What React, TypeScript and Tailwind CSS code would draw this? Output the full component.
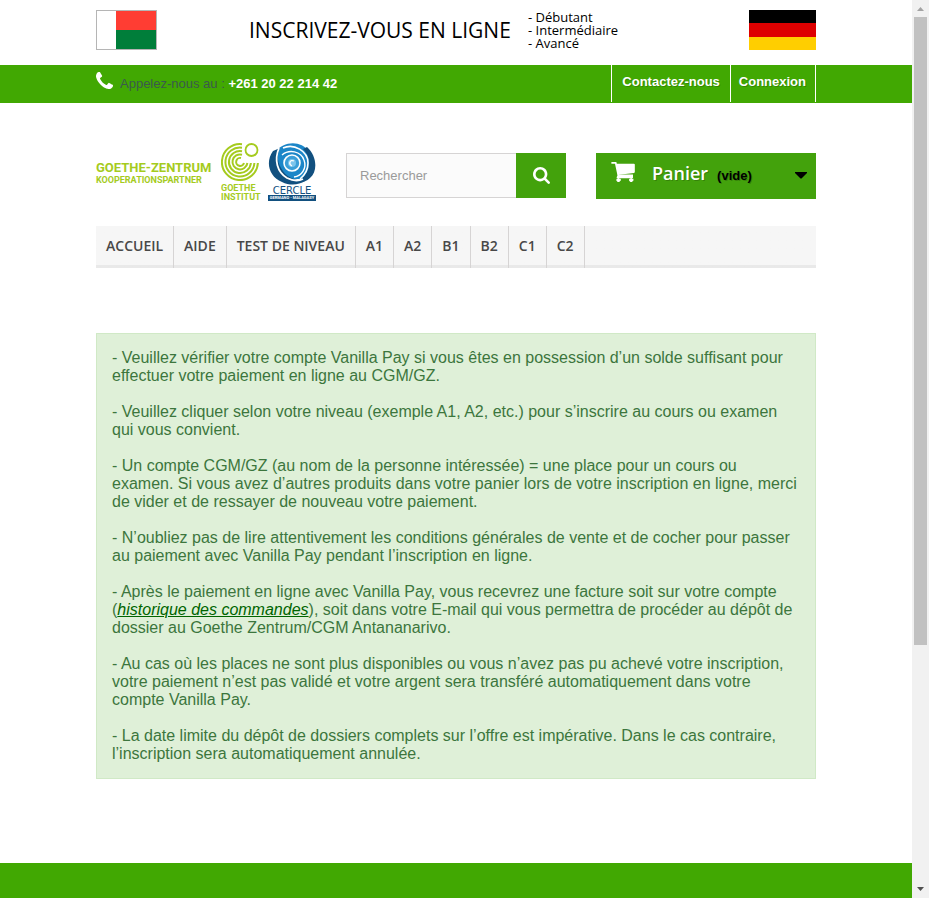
import React from "react";

const NAV = ["ACCUEIL", "AIDE", "TEST DE NIVEAU", "A1", "A2", "B1", "B2", "C1", "C2"];

function PhoneIcon() {
  return (
    <svg viewBox="0 128 1408 1408" className="size-[17px] fill-white" aria-hidden="true">
      <path d="M1408 1240q0 27-10 70.5t-21 68.5q-21 50-122 106-94 51-186 51-27 0-53-3.5t-57.5-12.5-47-14.5-55.5-20.5-49-18q-98-35-175-83-127-79-264-216t-216-264q-48-77-83-175-3-9-18-49t-20.5-55.5-14.5-47-12.5-57.5-3.5-53q0-92 51-186 56-101 106-122 25-11 68.5-21t70.5-10q14 0 21 3 18 6 53 76 11 19 30 54t35 63.5 31 53.5q3 4 17.5 25t21.5 35.5 7 28.5q0 20-28.5 50t-62 55-62 53-28.5 46q0 9 5 22.5t8.5 20.5 14 24 11.5 19q76 137 174 235t235 174q2 1 19 11.5t24 14 20.5 8.5 22.5 5q18 0 46-28.5t53-62 55-62 50-28.5q14 0 28.5 7t35.5 21.5 25 17.5q25 15 53.5 31t63.5 35 54 30q70 35 76 53 3 7 3 21z" />
    </svg>
  );
}

function SearchIcon() {
  return (
    <svg viewBox="64 128 1664 1664" className="size-[17px] fill-white" aria-hidden="true">
      <path d="M1216 832q0-185-131.5-316.5t-316.5-131.5-316.5 131.5-131.5 316.5 131.5 316.5 316.5 131.5 316.5-131.5 131.5-316.5zm512 832q0 52-38 90t-90 38q-54 0-90-38l-343-342q-179 124-399 124-143 0-273.5-55.5t-225-150-150-225-55.5-273.5 55.5-273.5 150-225 225-150 273.5-55.5 273.5 55.5 225 150 150 225 55.5 273.5q0 220-124 399l343 343q37 37 37 90z" />
    </svg>
  );
}

function CartIcon() {
  return (
    <svg viewBox="64 256 1664 1408" className="h-5 w-6 fill-white" aria-hidden="true">
      <path d="M704 1536q0 52-38 90t-90 38-90-38-38-90 38-90 90-38 90 38 38 90zm896 0q0 52-38 90t-90 38-90-38-38-90 38-90 90-38 90 38 38 90zm128-1088v512q0 24-16.5 42.5t-40.5 21.5l-1044 122q13 60 13 70 0 16-24 64h920q26 0 45 19t19 45-19 45-45 19h-1024q-26 0-45-19t-19-45q0-11 8-31.5t16-36 21.5-40 15.5-29.5l-177-823h-204q-26 0-45-19t-19-45 19-45 45-19h256q16 0 28.5 6.5t19.5 15.5 13 24.5 8 26 5.5 29.5 4.5 26h1201q26 0 45 19t19 45z" />
      <path d="M520 1130h1080v210H560zM440 1440h300v130H440zM1330 1440h300v130h-300z" />
    </svg>
  );
}

function GoetheMark() {
  return (
    <svg viewBox="0 0 38 38" className="size-[38px]" fill="none" stroke="#a5cb1e" aria-hidden="true">
      <circle cx="30.5" cy="7" r="6" strokeWidth="1.8" />
      <g strokeWidth="2">
        <path d="M21 1.200A18 18 0 1 0 36.900 20" />
        <path d="M21 4.700A14.500 14.500 0 1 0 33.400 20" />
        <path d="M21 8.200A11 11 0 1 0 29.900 20" />
        <path d="M21 11.700A7.500 7.500 0 1 0 26.400 20" />
        <path d="M20 15A4 4 0 1 0 23 20" />
      </g>
    </svg>
  );
}

function CercleMark() {
  return (
    <svg viewBox="0 0 48 43" className="h-[43px] w-12" fill="none" aria-hidden="true">
      <path d="M7 9C16-2 33-3 41 9c5 9 3 20-4 27H12C2 30 1 18 7 9z" fill="#1c86c8" />
      <path d="M5 8C-3 19 1 34 14 39c8 4 17 3 23-1-11 0-20-5-24-13C9 18 9 11 12 5z" fill="#12507f" />
      <path d="M39 4c10 9 11 24 3 31-4 4-9 5-14 4 9-4 13-11 13-19 0-7-3-11-6-14z" fill="#12507f" />
      <path d="M11 5C6 17 9 29 19 35c6 3 12 3 16 1" stroke="#fff" strokeWidth="1.8" />
      <path d="M15 5C26 0 40 8 40 20c0 7-3 12-8 16" stroke="#fff" strokeWidth="1.6" />
      <path d="M14 12c7-6 19-4 22 5 3 8-2 16-10 17" stroke="#fff" strokeWidth="1.4" />
      <circle cx="24" cy="20" r="8" fill="#3c9fd8" stroke="#fff" strokeWidth="1.6" />
      <circle cx="24" cy="20" r="4" fill="#7cc5ec" />
      <path d="M26 18c-4-2-6 3-2 5" stroke="#fff" strokeWidth="1.3" />
    </svg>
  );
}

function Logo() {
  return (
    <a href="#" aria-label="Goethe-Zentrum" className="flex w-[220px] shrink-0 font-['Roboto',sans-serif] font-bold text-[#a5cb1e]">
      <span className="w-[125px] pt-[17px] whitespace-nowrap">
        <span className="block text-[13px] leading-[15px]">GOETHE-ZENTRUM</span>
        <span className="block text-[9px] leading-[10px]">KOOPERATIONSPARTNER</span>
      </span>
      <span className="flex w-[47px] flex-col whitespace-nowrap">
        <GoetheMark />
        <span className="pt-[3px] text-[9px] leading-[9px]">GOETHE<br />INSTITUT</span>
      </span>
      <span className="flex w-12 flex-col text-center whitespace-nowrap text-[#12507f]">
        <CercleMark />
        <span className="font-['DejaVu_Sans',sans-serif] text-[10px] leading-[9px] font-normal">CERCLE</span>
        <span className="bg-[#12507f] text-[4px] leading-[6px] text-white">GERMANO - MALAGASY</span>
      </span>
    </a>
  );
}

const PARAS: React.ReactNode[] = [
  "- Veuillez vérifier votre compte Vanilla Pay si vous êtes en possession d’un solde suffisant pour effectuer votre paiement en ligne au CGM/GZ.",
  "- Veuillez cliquer selon votre niveau (exemple A1, A2, etc.) pour s’inscrire au cours ou examen qui vous convient.",
  "- Un compte CGM/GZ (au nom de la personne intéressée) = une place pour un cours ou examen. Si vous avez d’autres produits dans votre panier lors de votre inscription en ligne, merci de vider et de ressayer de nouveau votre paiement.",
  "- N’oubliez pas de lire attentivement les conditions générales de vente et de cocher pour passer au paiement avec Vanilla Pay pendant l’inscription en ligne.",
  <>
    - Après le paiement en ligne avec Vanilla Pay, vous recevrez une facture soit sur votre compte (
    <a href="#" className="text-[#006400] italic underline">historique des commandes</a>
    ), soit dans votre E-mail qui vous permettra de procéder au dépôt de dossier au Goethe Zentrum/CGM Antananarivo.
  </>,
  "- Au cas où les places ne sont plus disponibles ou vous n’avez pas pu achevé votre inscription, votre paiement n’est pas validé et votre argent sera transféré automatiquement dans votre compte Vanilla Pay.",
  "- La date limite du dépôt de dossiers complets sur l’offre est impérative. Dans le cas contraire, l’inscription sera automatiquement annulée.",
];

function Scrollbar() {
  return (
    <div className="flex w-[17px] shrink-0 flex-col items-center bg-[#f1f1f1]" aria-hidden="true">
      <svg viewBox="0 0 17 17" className="size-[17px]"><path d="M5 11h7L8.500 7z" fill="#a3a3a3" /></svg>
      <div className="h-[628px] w-[13px] bg-[#c1c1c1]" />
      <svg viewBox="0 0 17 17" className="mt-auto size-[17px]"><path d="M5 6h7L8.500 10z" fill="#505050" /></svg>
    </div>
  );
}

export default function App() {
  return (
    <div className="flex h-screen overflow-hidden bg-white font-['Liberation_Sans',Arial,sans-serif]">
      <div className="flex min-w-0 flex-1 flex-col">
        <header>
          <div className="mx-auto flex h-[65px] max-w-[720px] items-start pt-[10px] text-black">
            <div className="flex h-10 w-[61px] border border-[#b5b5b5]">
              <div className="w-[19px]" />
              <div className="flex flex-1 flex-col">
                <div className="flex-1 bg-[#ff3d33]" />
                <div className="flex-1 bg-[#007e3a]" />
              </div>
            </div>
            <div className="ml-[92px] w-[279px] font-['Open_Sans',sans-serif] text-[21px] leading-10 whitespace-nowrap">INSCRIVEZ-VOUS EN LIGNE</div>
            <ul className="pt-px font-['Open_Sans',sans-serif] text-[13px] leading-[13px]">
              <li>- Débutant</li>
              <li>- Intermédiaire</li>
              <li>- Avancé</li>
            </ul>
            <div className="ml-auto flex h-10 w-[67px] flex-col">
              <div className="flex-1 bg-black" />
              <div className="flex-1 bg-[#dd0000]" />
              <div className="flex-1 bg-[#ffce00]" />
            </div>
          </div>

          <div className="bg-[#41a802]">
            <div className="mx-auto flex h-[38px] max-w-[720px] justify-between text-[13px]">
              <div className="flex pt-[7px] text-[#3b5a4c]">
                <PhoneIcon />
                <span className="pt-[3px] pl-[7px] leading-[18px]">
                  Appelez-nous au : <strong className="text-white">+261 20 22 214 42</strong>
                </span>
              </div>
              <div className="flex h-[37px] border-x border-white leading-[33px] font-bold text-white [text-shadow:1px_1px_rgba(0,0,0,0.2)]">
                <a href="#" className="border-r border-white px-[10px]">Contactez-nous</a>
                <a href="#" className="pr-[9px] pl-2">Connexion</a>
              </div>
            </div>
          </div>

          <div className="mx-auto flex max-w-[720px] items-start pt-10">
            <Logo />
            <form className="mt-[10px] ml-[30px] flex h-[45px] w-[220px]" onSubmit={(e) => e.preventDefault()}>
              <input
                type="text"
                aria-label="Rechercher"
                placeholder="Rechercher"
                className="min-w-0 flex-1 border border-r-0 border-[#d6d4d4] bg-[#fbfbfb] px-[13px] text-[13px] placeholder:text-[#9a9a9a]"
              />
              <button type="submit" aria-label="Lancer la recherche" className="flex w-[50px] items-center justify-center bg-[#43a20c]">
                <SearchIcon />
              </button>
            </form>
            <button type="button" className="mt-[10px] ml-[30px] flex h-[46px] flex-1 items-start bg-[#43a20c] pr-[9px] pl-[15px] text-left">
              <span className="pt-[9px]"><CartIcon /></span>
              <span className="pt-[9px] pl-[17px] font-['Open_Sans',sans-serif] text-[18px] leading-[22px] font-semibold text-white [text-shadow:1px_1px_rgba(0,0,0,0.2)]">Panier</span>
              <span className="pt-[12px] pl-[9px] text-[13px] leading-[22px] font-bold text-black [text-shadow:1px_1px_rgba(0,0,0,0.2)]">(vide)</span>
              <svg viewBox="0 0 12 7" className="mt-[19px] ml-auto h-[7px] w-3" aria-hidden="true"><path d="M0 0h12v1L7 6q-1 1-2 0L0 1z" /></svg>
            </button>
          </div>

          <nav className="mx-auto mt-6 flex h-[42px] max-w-[720px] bg-linear-to-t from-[#e9e9e9] from-[3px] to-[#f6f6f6] to-[3px] font-['Open_Sans',sans-serif] text-[14px] leading-10 font-semibold text-[#484848]">
            {NAV.map((item) => (
              <a key={item} href="#" className="border-r border-[#d6d4d4] px-[10px]">{item}</a>
            ))}
          </nav>
        </header>

        <main className="mx-auto mt-[65px] w-full max-w-[720px]">
          <div className="space-y-[18px] border border-[#d0e9c6] bg-[#dff0d8] p-[15px] text-[16px] leading-[18px] text-[#3c763d]">
            {PARAS.map((para, i) => (
              <p key={i}>{para}</p>
            ))}
          </div>
        </main>

        <footer className="mt-[84px] flex-1 bg-[#41a802]" />
      </div>
      <Scrollbar />
    </div>
  );
}
